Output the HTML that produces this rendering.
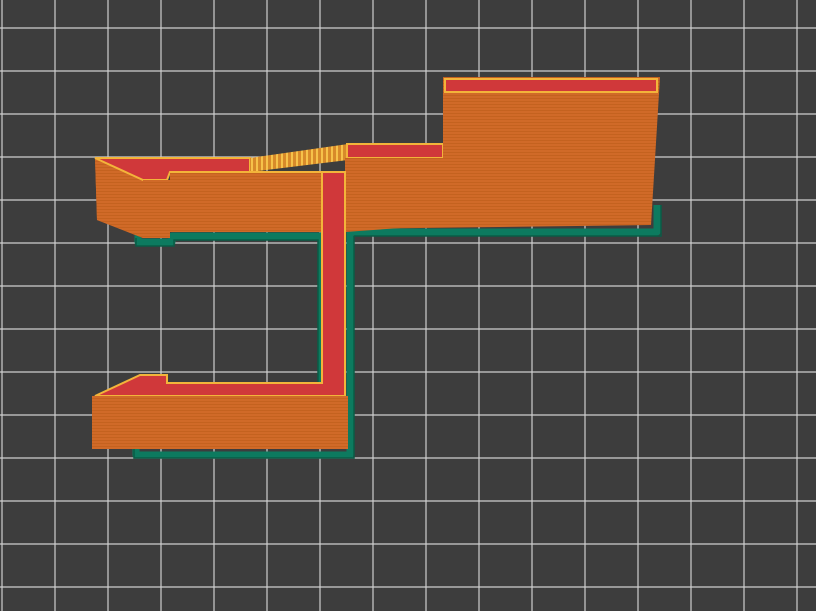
<!DOCTYPE html>
<html><head><style>
html,body{margin:0;padding:0;background:#3d3d3d;}
svg{display:block}
</style></head><body>
<svg width="816" height="611" viewBox="0 0 816 611" xmlns="http://www.w3.org/2000/svg">
<defs>
<pattern id="stripes" width="4" height="3" patternUnits="userSpaceOnUse">
<rect width="4" height="3" fill="#d06a28"/><rect y="2" width="4" height="1" fill="#c4621f"/>
</pattern>
<pattern id="ribs" width="5" height="20" patternUnits="userSpaceOnUse">
<rect width="5" height="20" fill="#d88a2a"/><rect x="1" width="2" height="20" fill="#f6c24a"/>
</pattern>
</defs>
<rect width="816" height="611" fill="#3d3d3d"/>
<g stroke="#cfcfcf" stroke-width="1.2" fill="none">
<path d="M2 0V611M55 0V611M108 0V611M161 0V611M214 0V611M267 0V611M320 0V611M373 0V611M426 0V611M479 0V611M532 0V611M585 0V611M638 0V611M691 0V611M744 0V611M797 0V611"/>
<path d="M0 28H816M0 71H816M0 114H816M0 157H816M0 200H816M0 243H816M0 286H816M0 329H816M0 372H816M0 415H816M0 458H816M0 501H816M0 544H816M0 587H816"/>
</g>
<!-- green skirt -->
<g fill="none" stroke="#0d7a5f" stroke-width="7" stroke-linejoin="round">
<path d="M138 234V242H172V236H321V390M350 390V455H136V448M350 232V390M350 232H657V205"/>
</g>
<g fill="none" stroke="#0a5c47" stroke-width="1.5">
<path d="M136 238V246H174V240H318V390M354 236V458H134V448M354 236H661V205"/>
</g>
<!-- left block side -->
<polygon points="95,158 143,180 143,238 97,220" fill="#c5621f"/>
<rect x="95" y="160" width="48" height="78" fill="url(#stripes)" opacity=".9" clip-path="polygon(0 0)"/>
<polygon points="95,158 143,180 143,238 97,220" fill="url(#stripes)"/>
<!-- left top face -->
<polygon points="95,158 250,158 250,172 170,172 167,180 143,180" fill="#d0383a" stroke="#f3b43a" stroke-width="2"/>
<!-- ramp ribs -->
<polygon points="250,158 348,144 348,160 250,172" fill="url(#ribs)"/>
<!-- middle top -->
<rect x="347" y="144" width="96" height="14" fill="#d0383a" stroke="#f3b43a" stroke-width="2"/>
<!-- tall block -->
<polygon points="443,77 660,77 651,225 443,225" fill="url(#stripes)"/>
<rect x="445" y="79" width="212" height="13" fill="#d0383a" stroke="#f3b43a" stroke-width="2"/>
<!-- main front -->
<polygon points="345,158 443,158 443,225 345,232" fill="url(#stripes)"/>
<polygon points="345,158 651,158 651,225 345,229" fill="url(#stripes)"/>
<polygon points="143,180 170,180 170,238 143,238" fill="url(#stripes)"/>
<rect x="170" y="172" width="152" height="60" fill="url(#stripes)"/>
<line x1="170" y1="172" x2="322" y2="172" stroke="#f3b43a" stroke-width="2"/>
<!-- vertical strip -->
<rect x="322" y="172" width="23" height="218" fill="#d0383a" stroke="#f3b43a" stroke-width="2"/>
<!-- bottom top face -->
<polygon points="95,396 140,375 167,375 167,383 322,383 322,172 345,172 345,396" fill="#d0383a" stroke="#f3b43a" stroke-width="2"/>
<!-- bottom front -->
<rect x="92" y="396" width="256" height="53" fill="url(#stripes)"/>
</svg>
</body></html>
